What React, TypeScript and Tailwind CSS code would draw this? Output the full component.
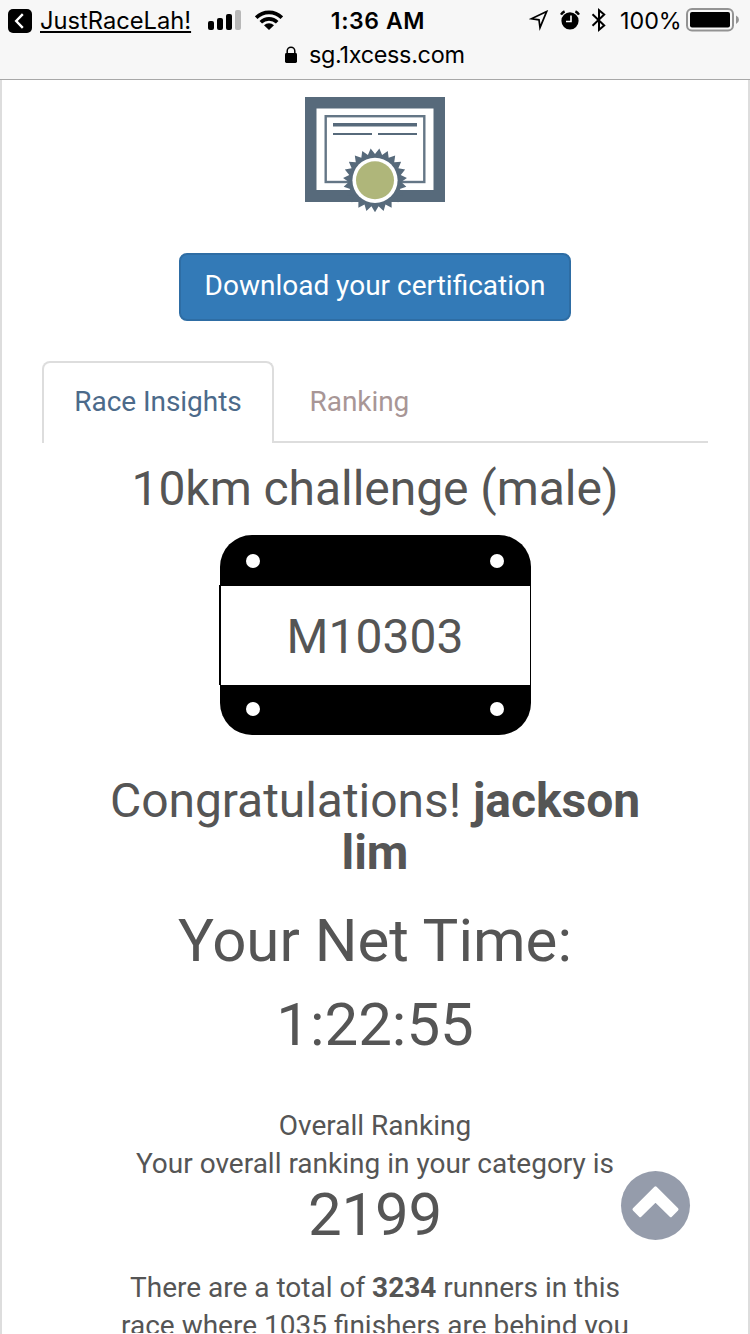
import React from "react";

const TEETH = 23;
const CX = 70;
const CY = 83.3;
const seal = Array.from({ length: TEETH * 2 }, (_, i) => {
  const a = Math.PI / 2 + (i * Math.PI) / TEETH;
  const r = i % 2 === 0 ? 32 : 26.3;
  return `${(CX + r * Math.cos(a)).toFixed(2)},${(CY + r * Math.sin(a)).toFixed(2)}`;
}).join(" ");

function Certificate() {
  return (
    <svg width="140" height="116" viewBox="0 0 140 116" className="block">
      <rect width="140" height="105" fill="#576a7b" />
      <rect x="11.5" y="11.5" width="117" height="81.5" fill="#fff" />
      <rect x="20.7" y="19.2" width="98.6" height="65.8" fill="none" stroke="#647686" strokeWidth="2.4" />
      <path d="M28 27.7h84" stroke="#576a7b" strokeWidth="3.4" />
      <path d="M28 37h39M73 37h39" stroke="#576a7b" strokeWidth="2.2" />
      <polygon points={seal} fill="#576a7b" />
      <circle cx={CX} cy={CY} r="22.6" fill="#fff" />
      <circle cx={CX} cy={CY} r="19" fill="#afb67a" />
    </svg>
  );
}

function StatusBar() {
  return (
    <div className="flex h-[40px] w-full items-center">
      <div className="flex w-[290px] shrink-0 items-center pl-2">
        <svg width="24" height="24" viewBox="0 0 24 24" className="mt-px">
          <rect width="24" height="24" rx="5" fill="#000" />
          <path d="M14.8 5.2 8.2 12l6.6 6.8" fill="none" stroke="#fff" strokeWidth="2.4" />
        </svg>
        <div className="ml-2 mt-[2px] h-[32px] w-[151px] whitespace-nowrap text-[23.7px] leading-[32px] underline decoration-2 underline-offset-[2px]">JustRaceLah!</div>
        <svg width="34" height="20" viewBox="0 0 34 20" className="ml-[17px]">
          <rect x="0" y="11" width="6" height="9" rx="2" />
          <rect x="9" y="8" width="6" height="12" rx="2" />
          <rect x="18" y="4" width="6" height="16" rx="2" />
          <rect x="27" y="0" width="6" height="20" rx="2" fill="#b8b8b8" />
        </svg>
        <svg width="28" height="20" viewBox="0 0 28 20" className="ml-[13px]">
          <g fill="none" stroke="#000" strokeWidth="3.6">
            <path d="M1.2 7.6a18.2 18.2 0 0 1 25.6 0" />
            <path d="M5.8 12.3a11.6 11.6 0 0 1 16.4 0" />
          </g>
          <path d="M14 20 9 15.2a7.2 7.2 0 0 1 10 0z" />
        </svg>
      </div>
      <div className="mt-[2px] w-[176px] whitespace-nowrap text-center text-[23px] font-semibold tracking-[0.6px]">1:36 AM</div>
      <div className="flex flex-1 items-center pl-[63px]">
        <svg width="20" height="22" viewBox="0 0 20 22">
          <path d="M17.6 2.6 2.4 9.8l7.6 1 1 7.8z" fill="none" stroke="#000" strokeWidth="1.7" />
        </svg>
        <svg width="20" height="20" viewBox="0 0 20 20" className="ml-[11px]">
          <circle cx="10" cy="10.8" r="8.6" />
          <path d="M1 4.6A9 9 0 0 1 4.6 1.4M19 4.6A9 9 0 0 0 15.4 1.4" stroke="#000" strokeWidth="2.4" fill="none" />
          <path d="M11 5.5v6H6" stroke="#fff" strokeWidth="1.6" fill="none" />
        </svg>
        <svg width="16" height="24" viewBox="0 0 16 24" className="ml-[11px]">
          <path d="M1.5 6.3 13.2 17.4 8 21.8V2.2l5.2 4.4L1.5 17.7" fill="none" stroke="#000" strokeWidth="2" />
        </svg>
        <div className="ml-[13px] mt-[2px] w-[62px] whitespace-nowrap text-[23.3px]">100%</div>
        <svg width="54" height="24" viewBox="0 0 54 24" className="ml-[4px]">
          <rect x="1" y="1" width="46" height="21.4" rx="5" fill="none" stroke="#939393" strokeWidth="2" />
          <rect x="4" y="4" width="40" height="15.4" rx="2" />
          <path d="M50 7.5q3 1.4 3 4.2t-3 4.2z" fill="#939393" />
        </svg>
      </div>
    </div>
  );
}

function BibHoles() {
  return (
    <>
      <i className="size-[14px] rounded-full bg-white" />
      <i className="size-[14px] rounded-full bg-white" />
    </>
  );
}

export default function App() {
  return (
    <div className="flex h-[1334px] w-[750px] flex-col overflow-hidden bg-white font-['Roboto',sans-serif] text-[#555]">
      <header className="h-[80px] shrink-0 border-b border-[#a8a8a8] bg-[#f7f7f7] font-['Inter',sans-serif] text-black">
        <StatusBar />
        <div className="flex h-[30px] items-center pl-[285px]">
          <svg width="12" height="18" viewBox="0 0 12 18">
            <rect y="7" width="12" height="10" rx="1.4" />
            <path d="M2.2 8V5a3.8 3.8 0 0 1 7.6 0v3" fill="none" stroke="#000" strokeWidth="1.5" />
          </svg>
          <span className="ml-[12px] whitespace-nowrap text-[23.4px] tracking-[-0.3px]">sg.1xcess.com</span>
        </div>
      </header>

      <main className="relative flex flex-1 flex-col items-center border-x-2 border-[#ddd] pt-[17px]">
        <Certificate />
        <button className="mt-[40px] h-[68px] w-[392px] shrink-0 whitespace-nowrap rounded-lg border-2 border-[#2e6da4] bg-[#337ab7] pb-[2px] text-[28px] text-white">
          Download your certification
        </button>

        <nav className="mt-[40px] flex h-[82px] w-[666px] shrink-0 text-[28px] tracking-[-0.05px]">
          <div className="flex w-[232px] justify-center rounded-t-lg border-2 border-b-0 border-[#ddd] pt-[18px] leading-[42px] text-[#4c6a8a]">
            <span className="whitespace-nowrap">Race Insights</span>
          </div>
          <div className="flex-1 border-b-2 border-[#ddd] pl-[35.5px] pt-[20px] leading-[42px] text-[#a89696]">Ranking</div>
        </nav>

        <h2 className="mt-[20px] whitespace-nowrap text-[48px] leading-[52px] tracking-[-0.05px]">10km challenge (male)</h2>

        <div className="mt-[20px] flex h-[200px] w-[311px] shrink-0 flex-col">
          <div className="flex h-[50px] shrink-0 items-center justify-between rounded-t-[32px] bg-black pl-[26px] pr-[27px] pt-[2px]">
            <BibHoles />
          </div>
          <div className="-ml-px h-[100px] border-l-2 border-r border-t border-black bg-white text-center text-[48px] leading-[101px]">M10303</div>
          <div className="flex h-[50px] shrink-0 items-center justify-between rounded-b-[32px] bg-black pb-[2px] pl-[26px] pr-[27px]">
            <BibHoles />
          </div>
        </div>

        <h2 className="mt-[40px] text-center text-[48px] leading-[52px] tracking-[-0.05px]">
          Congratulations! <b>jackson</b>
          <br />
          <b>lim</b>
        </h2>
        <h1 className="mt-[20px] text-center text-[60px] leading-[84px]">
          Your Net Time:
          <br />
          1:22:55
        </h1>
        <div className="mt-[40px] text-center text-[28px] leading-[38px]">
          <p>Overall Ranking</p>
          <p className="whitespace-nowrap">Your overall ranking in your category is</p>
        </div>
        <div className="-mt-px text-[60px] leading-[66px] tracking-[-0.2px]">2199</div>
        <div className="mt-[21px] h-[64px] overflow-hidden whitespace-nowrap text-center text-[28px] leading-[38px]">
          <p>There are a total of <b>3234</b> runners in this</p>
          <p>race where 1035 finishers are behind you</p>
        </div>

        <button className="absolute left-[619px] top-[1091px] size-[69px] rounded-full bg-[#959cab]" aria-label="Back to top">
          <svg width="69" height="69" viewBox="0 0 69 69">
            <path d="M34.5 16.8 13 38.4l6.2 6.2L34.5 29.6l15.3 15 6.2-6.2z" fill="#fff" stroke="#fff" strokeWidth="3" strokeLinejoin="round" />
          </svg>
        </button>
      </main>
    </div>
  );
}
